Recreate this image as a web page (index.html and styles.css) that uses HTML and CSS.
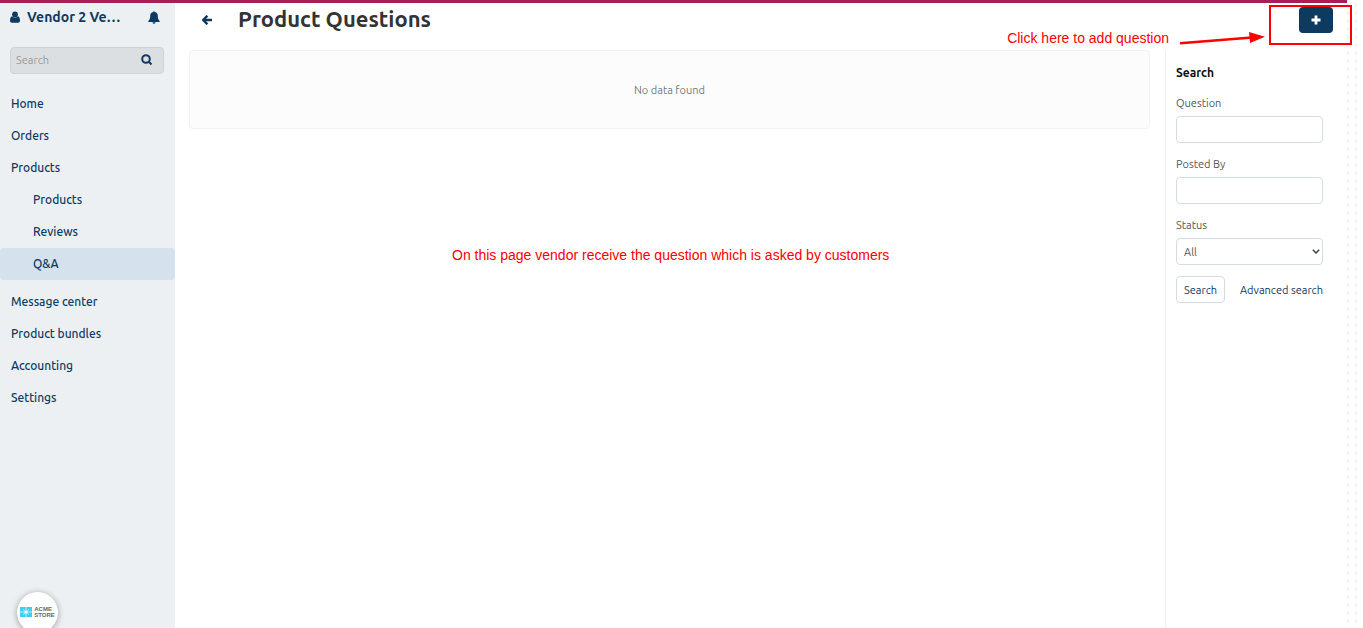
FILE: index.html
```html
<!DOCTYPE html>
<html lang="en">
<head>
<meta charset="utf-8">
<meta name="viewport" content="width=device-width, initial-scale=1">
<title>Product Questions</title>
<link rel="stylesheet" href="styles.css">
</head>
<body>
<div class="page">
  <div class="app">
    <aside class="sidebar">
      <div class="account">
        <svg class="icon-user" viewBox="0 0 10 12" aria-hidden="true"><circle cx="5" cy="3.4" r="2.9"/><path d="M2 5.200C.7 5.700 0 7.500 0 9.600c0 1.500.8 2.200 1.900 2.200h6.200c1.100 0 1.900-.7 1.900-2.200 0-2.100-.7-3.900-2-4.400A4 4 0 0 1 2 5.200z"/></svg>
        <span class="account-name">Vendor 2 Ve…</span>
        <button class="plain-button" type="button" aria-label="Notifications"><svg class="icon-bell" viewBox="0 0 12 13" aria-hidden="true"><path d="M6 .3c.5 0 .8.3.8.8 2 .4 3 1.900 3 3.900 0 2.700.7 4 2.100 5.200 0 .5-.4.800-.9.800H1c-.5 0-.9-.3-.9-.8C1.500 9 2.200 7.700 2.200 5c0-2 1-3.500 3-3.900 0-.5.300-.8.800-.8zM4.500 11.300h3a1.500 1.500 0 0 1-3 0z"/></svg></button>
      </div>
      <form class="quick-search">
        <input type="text" placeholder="Search" aria-label="Search the panel">
        <button class="plain-button" type="button" aria-label="Run search"><svg class="icon-search" viewBox="0 0 12 12" aria-hidden="true"><circle cx="5" cy="5" r="3.800"/><path d="M7.800 7.800l2.700 2.700"/></svg></button>
      </form>
      <nav class="menu">
        <a href="#">Home</a>
        <a href="#">Orders</a>
        <a href="#">Products</a>
        <div class="submenu">
          <a href="#">Products</a>
          <a href="#">Reviews</a>
          <a class="active" href="#">Q&amp;A</a>
        </div>
        <a href="#">Message center</a>
        <a href="#">Product bundles</a>
        <a href="#">Accounting</a>
        <a href="#">Settings</a>
      </nav>
      <div class="store-badge">
        <svg class="store-mark" viewBox="0 0 12 10" aria-hidden="true"><path fill="#3fcdf2" d="M0 0h5.700v10H0zM6.300 0H12v10H6.300z"/><path stroke="#fff" stroke-width=".6" d="M0 5h12M3 2.500l6 5M9 2.500l-6 5"/><circle cx="6" cy="5" r="1.500" fill="#fff"/></svg>
        <span>ACME<br>STORE</span>
      </div>
    </aside>
    <main class="content">
      <header class="title-bar">
        <a class="back" href="#" aria-label="Back"><svg class="icon-back" viewBox="0 0 10 10" aria-hidden="true"><path d="M5.400.7L1.300 5l4.100 4.300M1.800 5H10"/></svg></a>
        <h1>Product Questions</h1>
        <button class="add-button" type="button" aria-label="Add question"><svg class="icon-plus" viewBox="0 0 10 10" aria-hidden="true"><path d="M5 .5v9M.5 5h9"/></svg></button>
      </header>
      <div class="columns">
        <section class="results"><p class="no-items">No data found</p></section>
        <form class="filters">
          <h2>Search</h2>
          <div class="field"><label for="question">Question</label><input id="question" type="text"></div>
          <div class="field"><label for="posted">Posted By</label><input id="posted" type="text"></div>
          <div class="field"><label for="status">Status</label>
            <div class="select-box"><select id="status"><option>All</option></select><svg class="icon-caret" viewBox="0 0 8 5" aria-hidden="true"><path d="M.8.8L4 4 7.200.8"/></svg></div></div>
          <div class="actions"><button class="search-button" type="button">Search</button><a href="#">Advanced search</a></div>
        </form>
      </div>
    </main>
  </div>
  <div class="note note-add">Click here to add question</div>
  <svg class="note-arrow" viewBox="0 0 87 14" aria-hidden="true"><path stroke="#f00" stroke-width="2.400" d="M1 11.300L73 5.500"/><path fill="#f00" d="M70 0l16 4.700L71 11z"/></svg>
  <div class="note-frame"></div>
  <div class="note note-page">On this page vendor receive the question which is asked by customers</div>
</div>
</body>
</html>
```
FILE: styles.css
```css
* { box-sizing: border-box; }
body {
  margin: 0;
  font-family: Ubuntu, "Noto Sans", sans-serif;
  font-size: 11px;
  color: #555;
}
a { color: #0f3a5f; text-decoration: none; }
svg { display: block; flex: none; fill: #0f3a5f; }
input, select, button { font: inherit; color: inherit; margin: 0; }

.page {
  position: relative;
  min-height: 100vh;
  padding-right: 16px;
  overflow: hidden;
  background: radial-gradient(circle at 4px 4px, #f1f1f1 1px, transparent 2px) right 3px top 1px / 8px 8px #fff;
}
.app {
  display: flex;
  min-height: 100vh;
  border-top: 3px solid #a91e54;
  background: #fff;
}

.sidebar {
  position: relative;
  flex: none;
  width: 175px;
  background: #ecf0f3;
}
.account {
  display: flex;
  align-items: center;
  height: 28px;
  padding: 0 15px 0 10px;
}
.account-name {
  flex: 1;
  margin-left: 7px;
  font-size: 14px;
  font-weight: 700;
  color: #0f3a5f;
  white-space: nowrap;
}
.icon-user { width: 10px; height: 12px; }
.icon-bell { width: 12px; height: 13px; }
.icon-search { width: 12px; height: 12px; }
.icon-search, .icon-back, .icon-plus, .icon-caret {
  fill: none;
  stroke: #0f3a5f;
  stroke-width: 2;
}
.icon-back { stroke-width: 2.400; }
.plain-button { padding: 0; border: 0; background: none; }
.quick-search {
  display: flex;
  align-items: center;
  height: 27px;
  margin: 16px 11px 14px 10px;
  padding: 0 10px 2px 5px;
  border: 1px solid #cfd3d6;
  border-radius: 4px;
  background: #dcdfe1;
}
.quick-search input {
  flex: 1;
  min-width: 0;
  padding: 0;
  border: 0;
  background: none;
}
.quick-search input::placeholder { color: #999; }
.menu a {
  display: block;
  height: 32px;
  padding-left: 11px;
  font-size: 12px;
  font-weight: 500;
  line-height: 32px;
}
.submenu { margin-bottom: 6px; }
.menu .submenu a { padding-left: 33px; }
.menu .active { border-radius: 4px; background: #d5e1ed; }
.store-badge {
  position: absolute;
  left: 17px;
  bottom: -5px;
  display: flex;
  align-items: center;
  justify-content: center;
  gap: 2px;
  width: 41px;
  height: 41px;
  padding-bottom: 1px;
  border-radius: 50%;
  background: #fff;
  box-shadow: 0 1px 6px rgba(0, 0, 0, .35);
  font: 700 6px/6px "Liberation Sans", sans-serif;
  color: #666;
}
.store-mark { width: 12px; height: 10px; }

.content { flex: 1; min-width: 0; display: flex; flex-direction: column; }
.title-bar {
  display: flex;
  align-items: center;
  height: 34px;
  padding: 0 14px 0 27px;
}
.icon-back { width: 10px; height: 10px; }
h1 {
  flex: 1;
  margin: 0 0 2px 26px;
  font-size: 22px;
  line-height: 32px;
  color: #333;
}
.add-button {
  display: flex;
  align-items: center;
  justify-content: center;
  width: 34px;
  height: 26px;
  padding: 0;
  border: 0;
  border-radius: 4px;
  background: #0f3a5f;
}
.icon-plus { width: 10px; height: 10px; stroke: #fff; stroke-width: 2.800; }
.columns { flex: 1; display: flex; margin-top: 13px; }
.results { flex: 1; padding: 0 15px 0 14px; }
.no-items {
  display: flex;
  align-items: center;
  justify-content: center;
  height: 79px;
  margin: 0;
  border: 1px solid #f2f2f2;
  border-radius: 4px;
  background: #fcfcfc;
  color: #6f7b84;
}
.filters {
  flex: none;
  width: 182px;
  padding: 13px 24px 0 10px;
  border-left: 1px solid #eee;
}
h2 { margin: 0 0 10px; font-size: 12px; line-height: 20px; color: #111; }
.field { margin-bottom: 11px; }
.field label { display: block; height: 23px; line-height: 20px; }
.field input, .field select {
  display: block;
  width: 100%;
  height: 27px;
  padding: 0 7px;
  border: 1px solid #d5dce4;
  border-radius: 4px;
  background: #fff;
}
.field select { appearance: none; }
.select-box { position: relative; }
.icon-caret {
  position: absolute;
  top: 11px;
  right: 3px;
  width: 8px;
  height: 5px;
  stroke: #444;
  stroke-width: 1.500;
  pointer-events: none;
}
.actions {
  display: flex;
  align-items: center;
  justify-content: space-between;
  white-space: nowrap;
}
.search-button {
  height: 27px;
  padding: 0 7px;
  border: 1px solid #d5dce4;
  border-radius: 4px;
  background: #fff;
  color: #0f3a5f;
}

.note {
  position: absolute;
  font: 14px/20px "Liberation Sans", Arial, sans-serif;
  color: #f00;
  white-space: nowrap;
}
.note-add { top: 28px; right: 194px; }
.note-page { top: 245px; left: 452px; }
.note-arrow {
  position: absolute;
  top: 32px;
  right: 97px;
  width: 87px;
  height: 14px;
  fill: none;
}
.note-frame {
  position: absolute;
  top: 5px;
  right: 11px;
  width: 83px;
  height: 40px;
  border: 2px solid #f00;
}
```
